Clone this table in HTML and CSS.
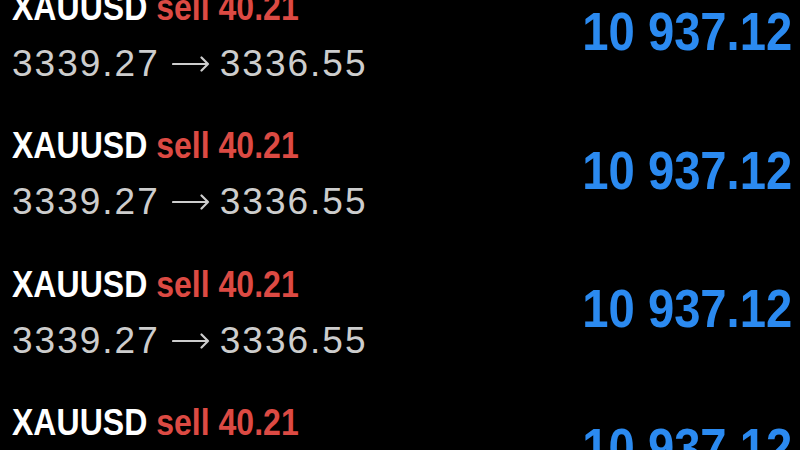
FILE: index.html
```html
<!DOCTYPE html>
<html lang="en">
<head>
  <meta charset="utf-8">
  <title>Trades</title>
  <link rel="stylesheet" href="styles.css">
</head>
<body>
  <div class="list">
    <div class="row">
      <div class="info">
        <div class="title">XAUUSD <span class="side">sell 40.21</span></div>
        <div class="prices">3339.27<svg class="arrow" viewBox="0 0 38 16" aria-label="→"><path d="M1 8H36M29.5 1.5L36 8L29.5 14.5"/></svg>3336.55</div>
      </div>
      <div class="profit">10 937.12</div>
    </div>
    <div class="row">
      <div class="info">
        <div class="title">XAUUSD <span class="side">sell 40.21</span></div>
        <div class="prices">3339.27<svg class="arrow" viewBox="0 0 38 16" aria-label="→"><path d="M1 8H36M29.5 1.5L36 8L29.5 14.5"/></svg>3336.55</div>
      </div>
      <div class="profit">10 937.12</div>
    </div>
    <div class="row">
      <div class="info">
        <div class="title">XAUUSD <span class="side">sell 40.21</span></div>
        <div class="prices">3339.27<svg class="arrow" viewBox="0 0 38 16" aria-label="→"><path d="M1 8H36M29.5 1.5L36 8L29.5 14.5"/></svg>3336.55</div>
      </div>
      <div class="profit">10 937.12</div>
    </div>
    <div class="row">
      <div class="info">
        <div class="title">XAUUSD <span class="side">sell 40.21</span></div>
        <div class="prices">3339.27<svg class="arrow" viewBox="0 0 38 16" aria-label="→"><path d="M1 8H36M29.5 1.5L36 8L29.5 14.5"/></svg>3336.55</div>
      </div>
      <div class="profit">10 937.12</div>
    </div>
  </div>
</body>
</html>
```

FILE: styles.css
```css
body {
  margin: 0;
  background: #000;
  font-family: "Liberation Sans", Arial, sans-serif;
  overflow: hidden;
}
.list {
  margin-top: -33px;
}
.row {
  display: flex;
  justify-content: space-between;
  align-items: center;
  padding: 20.75px 8px 20.75px 12px;
}
.title {
  color: #fff;
  font-size: 36px;
  font-weight: bold;
  line-height: 40px;
  white-space: nowrap;
  transform: scaleX(0.89);
  transform-origin: left center;
}
.side {
  color: #dc4a43;
}
.prices {
  color: #cdcdcd;
  font-size: 37px;
  line-height: 42px;
  margin-top: 15px;
  letter-spacing: 2px;
  white-space: nowrap;
}
.arrow {
  width: 38px;
  height: 16px;
  margin: 0 10px 0 12px;
  vertical-align: 4px;
  fill: none;
  stroke: #cdcdcd;
  stroke-width: 2.2;
  stroke-linecap: round;
  stroke-linejoin: round;
}
.profit {
  color: #2b8af0;
  font-size: 54px;
  font-weight: bold;
  line-height: 60px;
  margin-bottom: 10px;
  white-space: nowrap;
  transform: scaleX(0.874);
  transform-origin: right center;
}
```
